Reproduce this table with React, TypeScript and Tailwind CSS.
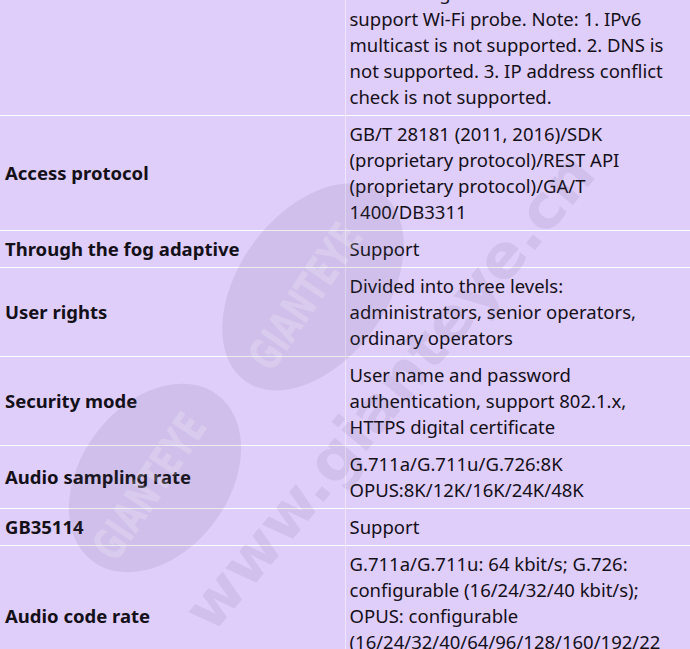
const rows: { label: string; lines: string[] }[] = [
  {
    label: "Network protocol",
    lines: [
      "IPv4, IGMP, ICMP, ARP, TCP, UDP, DHCP,",
      "RTP, RTSP, RTCP, DNS, DDNS, NTP, FTP,",
      "UPnP, HTTP, HTTPS, SMTP, SNMP, QoS,",
      "802.1X, SSL/TLS, ONVIF, SIP, SDK,",
      "GB/T 28181, RTMP, WebSocket, IPv6,",
      "ARP, ICMP, NTP, RTSP, TCP, UDP,",
      "ONVIF, RTCP, HTTP, DHCP, SNMP,",
      "Wi-Fi config",
      "support Wi-Fi probe. Note: 1. IPv6",
      "multicast is not supported. 2. DNS is",
      "not supported. 3. IP address conflict",
      "check is not supported.",
    ],
  },
  {
    label: "Access protocol",
    lines: [
      "GB/T 28181 (2011, 2016)/SDK",
      "(proprietary protocol)/REST API",
      "(proprietary protocol)/GA/T",
      "1400/DB3311",
    ],
  },
  { label: "Through the fog adaptive", lines: ["Support"] },
  {
    label: "User rights",
    lines: [
      "Divided into three levels:",
      "administrators, senior operators,",
      "ordinary operators",
    ],
  },
  {
    label: "Security mode",
    lines: [
      "User name and password",
      "authentication, support 802.1.x,",
      "HTTPS digital certificate",
    ],
  },
  {
    label: "Audio sampling rate",
    lines: ["G.711a/G.711u/G.726:8K", "OPUS:8K/12K/16K/24K/48K"],
  },
  { label: "GB35114", lines: ["Support"] },
  {
    label: "Audio code rate",
    lines: [
      "G.711a/G.711u: 64 kbit/s; G.726:",
      "configurable (16/24/32/40 kbit/s);",
      "OPUS: configurable",
      "(16/24/32/40/64/96/128/160/192/22",
      "4/256/320 kbit/s)",
    ],
  },
];

// faint site watermark drawn over the table
const Watermark = () => (
  <svg
    className="absolute inset-0 pointer-events-none"
    width="690"
    height="649"
    viewBox="0 0 690 649"
  >
    <g fill="#5a4f6a" fillOpacity="0.11">
      <ellipse cx="313" cy="287" rx="74" ry="116" transform="rotate(36 313 287)" />
      <ellipse cx="155" cy="478" rx="74" ry="104" transform="rotate(37 155 478)" />
    </g>
    <g
      fill="#ffffff"
      fillOpacity="0.2"
      fontFamily="'DejaVu Sans Condensed', 'Liberation Sans', sans-serif"
      fontWeight="700"
      fontSize="44"
      textAnchor="middle"
    >
      <text x="318" y="305" transform="rotate(-56 318 305)" textLength="165" lengthAdjust="spacingAndGlyphs">
        GIANTEYE
      </text>
      <text x="162" y="495" transform="rotate(-56 162 495)" textLength="165" lengthAdjust="spacingAndGlyphs">
        GIANTEYE
      </text>
    </g>
    <text
      x="405"
      y="405"
      transform="rotate(-50 405 405)"
      fill="#5a4f6a"
      fillOpacity="0.1"
      fontFamily="'DejaVu Sans Condensed', 'Liberation Sans', sans-serif"
      fontWeight="700"
      fontSize="60"
      textAnchor="middle"
      textLength="600"
      lengthAdjust="spacingAndGlyphs"
    >
      www.gianteye.cn
    </text>
  </svg>
);

export default function App() {
  return (
    <div className="relative w-[690px] h-[649px] overflow-hidden bg-[#dfcdfa] text-[#141018] font-['Noto_Sans',sans-serif] text-[18.5px] leading-[26px]">
      <table className="w-full border-collapse -mt-[207px]">
        <tbody>
          {rows.map((row) => (
            <tr key={row.label} className="border-b border-white">
              <td className="w-[345px] px-[5px] align-middle font-bold">{row.label}</td>
              <td className="border-l border-white/50 pl-[4px] pr-[4px] py-[5px] align-top">
                {row.lines.map((line, i) => (
                  <div key={i} className="whitespace-nowrap">
                    {line}
                  </div>
                ))}
              </td>
            </tr>
          ))}
        </tbody>
      </table>
      <Watermark />
    </div>
  );
}
